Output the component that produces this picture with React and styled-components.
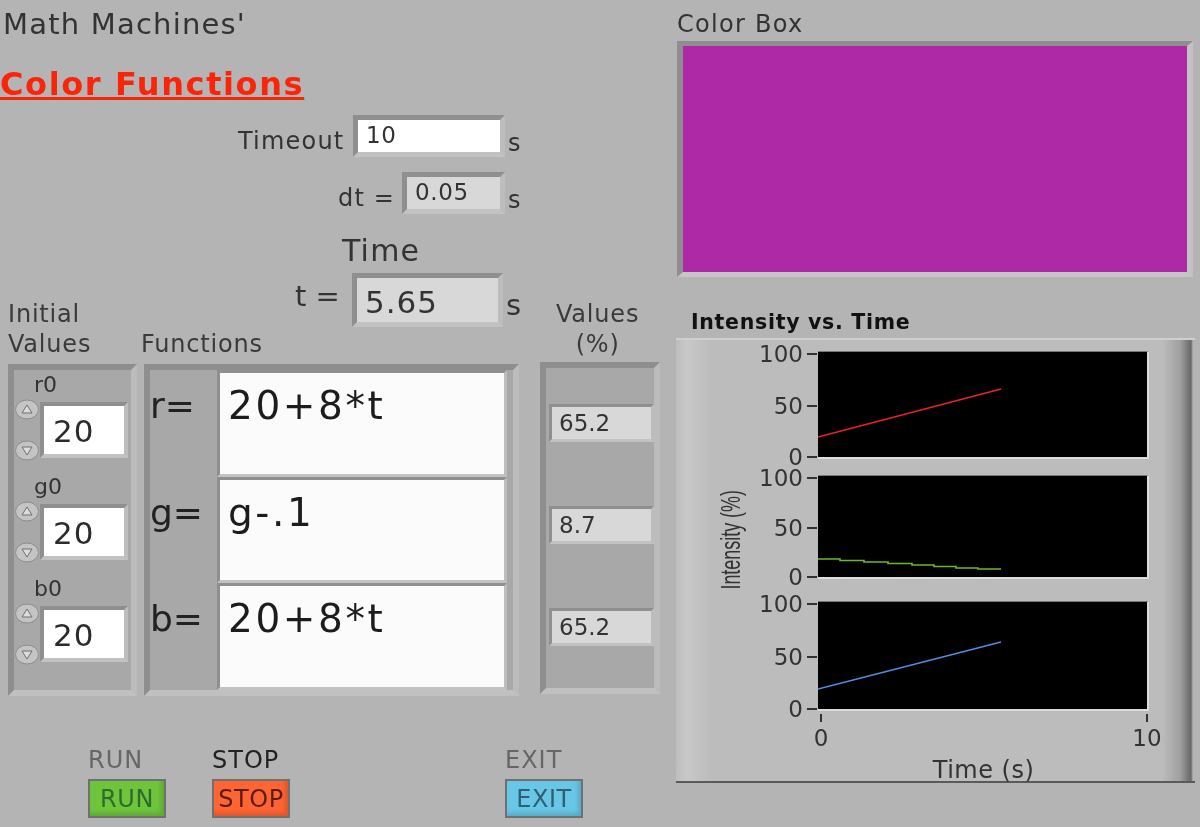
import React from "react";
import styled, { createGlobalStyle } from "styled-components";

const initials = [
  { name: "r0", value: "20" },
  { name: "g0", value: "20" },
  { name: "b0", value: "20" },
];
const functions = [
  { name: "r=", expr: "20+8*t" },
  { name: "g=", expr: "g-.1" },
  { name: "b=", expr: "20+8*t" },
];
const outputs = ["65.2", "8.7", "65.2"];
const plots = [
  { height: 108, color: "#ee2420", points: "0,85 183,37" },
  {
    height: 104,
    color: "#6ab82f",
    points:
      "0,83 22,83 22,84.5 46,84.5 46,86 70,86 70,87.5 94,87.5 94,89 116,89 116,90.5 138,90.5 138,92 160,92 160,93 183,93",
  },
  { height: 110, color: "#4f8fe0", points: "0,87 183,40" },
];

function Spin({ down }) {
  return (
    <svg width="26" height="21" viewBox="0 0 26 21">
      <ellipse cx="13" cy="10.5" rx="11.5" ry="9.5" fill="#c4c4c4" stroke="#8c8c8c" />
      <path
        d={down ? "M8 7h10l-5 8z" : "M8 14h10l-5-8z"}
        fill="#dcdcdc"
        stroke="#6f6f6f"
      />
    </svg>
  );
}

export default function App() {
  return (
    <Page>
      <GlobalStyle />
      <LeftColumn>
        <Heading>Math Machines'</Heading>
        <Title>Color Functions</Title>
        <SettingRow $left={238} $top={15}>
          <SettingLabel $width={115}>Timeout</SettingLabel>
          <Control $width={152}>10</Control>
          <Unit>s</Unit>
        </SettingRow>
        <SettingRow $left={338} $top={15}>
          <SettingLabel $width={64}>dt =</SettingLabel>
          <Indicator $width={103}>0.05</Indicator>
          <Unit>s</Unit>
        </SettingRow>
        <TimeLabel>Time</TimeLabel>
        <TimeRow>
          <TimeName>t =</TimeName>
          <TimeValue>5.65</TimeValue>
          <TimeUnit>s</TimeUnit>
        </TimeRow>
        <HeaderRow>
          <InitialHeader>
            Initial
            <br />
            Values
          </InitialHeader>
          <FunctionsHeader>Functions</FunctionsHeader>
          <ValuesHeader>
            Values
            <br />
            (%)
          </ValuesHeader>
        </HeaderRow>
        <PanelRow>
          <InitialPanel>
            {initials.map((item) => (
              <InitialCell key={item.name}>
                <CellName>{item.name}</CellName>
                <SpinRow>
                  <Spinner>
                    <Spin />
                    <Spin down />
                  </Spinner>
                  <SpinField>{item.value}</SpinField>
                </SpinRow>
              </InitialCell>
            ))}
          </InitialPanel>
          <FunctionPanel>
            {functions.map((item) => (
              <FunctionRow key={item.name}>
                <FunctionName>{item.name}</FunctionName>
                <FunctionField>{item.expr}</FunctionField>
              </FunctionRow>
            ))}
          </FunctionPanel>
          <ValuePanel>
            {outputs.map((value, idx) => (
              <ValueCell key={idx}>
                <ValueField>{value}</ValueField>
              </ValueCell>
            ))}
          </ValuePanel>
        </PanelRow>
        <ButtonRow>
          <ButtonGroup $left={88}>
            <ButtonLabel $color="#666">RUN</ButtonLabel>
            <Button $bg="#6fc43c" $color="#2e6b2c">
              RUN
            </Button>
          </ButtonGroup>
          <ButtonGroup $left={46}>
            <ButtonLabel $color="#222">STOP</ButtonLabel>
            <Button $bg="#ff6433" $color="#5b1c12">
              STOP
            </Button>
          </ButtonGroup>
          <ButtonGroup $left={215}>
            <ButtonLabel $color="#666">EXIT</ButtonLabel>
            <Button $bg="#68c6e6" $color="#2f5f70">
              EXIT
            </Button>
          </ButtonGroup>
        </ButtonRow>
      </LeftColumn>
      <RightColumn>
        <BoxLabel>Color Box</BoxLabel>
        <ColorBox />
        <ChartTitle>Intensity vs. Time</ChartTitle>
        <ChartPanel>
          <AxisTitle>
            <span>Intensity (%)</span>
          </AxisTitle>
          <ChartColumn>
            {plots.map((plot, idx) => (
              <PlotRow key={idx} $gap={idx === 0 ? 0 : idx === 1 ? 16 : 22}>
                <YTicks>
                  <YTick>100</YTick>
                  <YTick>50</YTick>
                  <YTick>0</YTick>
                </YTicks>
                <Plot $height={plot.height}>
                  <svg width="100%" height="100%">
                    <polyline
                      points={plot.points}
                      fill="none"
                      stroke={plot.color}
                      strokeWidth="1.6"
                    />
                  </svg>
                </Plot>
              </PlotRow>
            ))}
            <XAxis>
              <XTick>0</XTick>
              <XTick>10</XTick>
            </XAxis>
            <XTitle>Time (s)</XTitle>
          </ChartColumn>
        </ChartPanel>
      </RightColumn>
    </Page>
  );
}

const GlobalStyle = createGlobalStyle`
  html, body {
    margin: 0;
    padding: 0;
    background: #b4b4b4;
    overflow: hidden;
  }
  * {
    box-sizing: border-box;
  }
`;

const Page = styled.div`
  display: flex;
  width: 1200px;
  height: 827px;
  background: #b4b4b4;
  color: #2b2b2b;
  font-family: "DejaVu Sans", Verdana, sans-serif;
  filter: blur(0.35px);
`;

const LeftColumn = styled.div`
  display: flex;
  flex-direction: column;
  width: 677px;
`;

const RightColumn = styled.div`
  display: flex;
  flex-direction: column;
  width: 523px;
`;

const Heading = styled.div`
  margin-top: 8px;
  padding-left: 3px;
  font-size: 29px;
  line-height: 32px;
  letter-spacing: 1.2px;
  color: #333;
`;

const Title = styled.div`
  margin-top: 28px;
  font-size: 32px;
  line-height: 32px;
  letter-spacing: 1.6px;
  font-weight: bold;
  color: #fa2408;
  text-decoration: underline;
  white-space: nowrap;
`;

const SettingRow = styled.div`
  display: flex;
  align-items: center;
  height: 42px;
  margin-top: ${(p) => p.$top}px;
  padding-left: ${(p) => p.$left}px;
`;

const SettingLabel = styled.span`
  width: ${(p) => p.$width}px;
  padding-top: 9px;
  font-size: 24px;
  letter-spacing: 1.2px;
  color: #333;
  white-space: nowrap;
`;

const Recessed = styled.div`
  display: flex;
  align-items: center;
  border-style: solid;
  border-color: #8f8f8f #bdbdbd #c2c2c2 #8f8f8f;
`;

const Control = styled(Recessed)`
  width: ${(p) => p.$width}px;
  height: 42px;
  padding: 0 0 2px 8px;
  border-width: 5px;
  background: #fff;
  font-size: 23px;
  letter-spacing: 0.6px;
  color: #333;
`;

const Indicator = styled(Control)`
  background: #d8d8d8;
`;

const Unit = styled.span`
  margin: 14px 0 0 3px;
  font-size: 24px;
  color: #333;
`;

const TimeLabel = styled.div`
  margin-top: 23px;
  padding-left: 342px;
  font-size: 30px;
  line-height: 28px;
  letter-spacing: 1.2px;
  color: #333;
`;

const TimeRow = styled.div`
  display: flex;
  align-items: center;
  height: 54px;
  margin-top: 8px;
  padding-left: 295px;
`;

const TimeName = styled.span`
  width: 57px;
  padding-bottom: 8px;
  font-size: 29px;
  color: #333;
  white-space: pre;
`;

const TimeValue = styled(Recessed)`
  width: 151px;
  height: 54px;
  padding: 4px 0 0 8px;
  border-width: 5px;
  background: #d8d8d8;
  font-size: 31px;
  letter-spacing: 1px;
  color: #333;
`;

const TimeUnit = styled.span`
  margin: 10px 0 0 3px;
  font-size: 29px;
  color: #333;
`;

const HeaderRow = styled.div`
  display: flex;
  height: 61px;
  margin-top: -24px;
  padding-left: 8px;
  font-size: 24px;
  line-height: 30px;
  letter-spacing: 0.8px;
  color: #3a3a3a;
`;

const InitialHeader = styled.div`
  width: 133px;
  margin-top: -4px;
`;

const FunctionsHeader = styled.div`
  width: 415px;
  padding-top: 26px;
`;

const ValuesHeader = styled.div`
  margin-top: -4px;
  text-align: center;
`;

const PanelRow = styled.div`
  display: flex;
  align-items: flex-start;
  padding-left: 8px;
`;

const Raised = styled.div`
  display: flex;
  flex-direction: column;
  height: 332px;
  border-style: solid;
  border-width: 6px;
  border-color: #8e8e8e #bcbcbc #c0c0c0 #8e8e8e;
  background: #a8a8a8;
`;

const InitialPanel = styled(Raised)`
  width: 129px;
`;

const InitialCell = styled.div`
  height: 102px;
  padding-top: 3px;
`;

const CellName = styled.div`
  padding-left: 20px;
  font-size: 22px;
  line-height: 24px;
  color: #333;
`;

const SpinRow = styled.div`
  display: flex;
  align-items: center;
  margin-top: 2px;
`;

const Spinner = styled.div`
  display: flex;
  flex-direction: column;
  justify-content: space-between;
  flex: none;
  width: 26px;
  height: 62px;
`;

const SpinField = styled(Recessed)`
  width: 88px;
  height: 56px;
  padding: 2px 0 0 9px;
  border-width: 4px;
  background: #fff;
  font-size: 31px;
  letter-spacing: 1px;
  color: #2b2b2b;
`;

const FunctionPanel = styled(Raised)`
  width: 375px;
  margin-left: 7px;
`;

const FunctionRow = styled.div`
  display: flex;
  flex: 1;
`;

const FunctionName = styled.div`
  width: 67px;
  padding-top: 14px;
  font-size: 36px;
  line-height: 44px;
  color: #222;
`;

const FunctionField = styled(Recessed)`
  align-items: flex-start;
  width: 290px;
  padding: 7px 0 0 8px;
  border-width: 3px;
  background: #fbfbfb;
  font-size: 39px;
  line-height: 52px;
  letter-spacing: 2.6px;
  color: #1c1c1c;
`;

const ValuePanel = styled(Raised)`
  width: 120px;
  margin: -2px 0 0 21px;
  padding-top: 4px;
`;

const ValueCell = styled.div`
  display: flex;
  align-items: center;
  height: 102px;
  padding-left: 3px;
`;

const ValueField = styled(Recessed)`
  width: 106px;
  height: 38px;
  padding-left: 7px;
  border-width: 3px;
  background: #d8d8d8;
  font-size: 23px;
  color: #333;
`;

const ButtonRow = styled.div`
  display: flex;
  margin-top: 52px;
`;

const ButtonGroup = styled.div`
  display: flex;
  flex-direction: column;
  margin-left: ${(p) => p.$left}px;
`;

const ButtonLabel = styled.div`
  font-size: 24px;
  line-height: 24px;
  letter-spacing: 1px;
  color: ${(p) => p.$color};
`;

const Button = styled.div`
  display: flex;
  align-items: center;
  justify-content: center;
  width: 78px;
  height: 39px;
  margin-top: 7px;
  border: 2px solid #707070;
  background: ${(p) => p.$bg};
  color: ${(p) => p.$color};
  font-size: 24px;
  letter-spacing: 0.6px;
  white-space: nowrap;
  box-shadow: inset -3px -3px 4px rgba(0, 0, 0, 0.14);
`;

const BoxLabel = styled.div`
  margin-top: 10px;
  font-size: 24px;
  line-height: 28px;
  letter-spacing: 1.3px;
  color: #333;
`;

const ColorBox = styled.div`
  width: 516px;
  height: 236px;
  margin-top: 3px;
  border-style: solid;
  border-width: 5px 6px;
  border-color: #8e8e8e #c2c2c2 #c6c6c6 #8e8e8e;
  background: #ae29a6;
`;

const ChartTitle = styled.div`
  margin: 34px 0 0 14px;
  font-size: 20.5px;
  line-height: 22px;
  font-weight: bold;
  letter-spacing: 0.7px;
  color: #111;
`;

const ChartPanel = styled.div`
  display: flex;
  width: 519px;
  height: 445px;
  margin: 5px 0 0 -1px;
  padding: 11px 0 0 41px;
  border-top: 2px solid #cfcfcf;
  border-bottom: 2px solid #5a5a5a;
  background: linear-gradient(
    90deg,
    #bdbdbd 0,
    #c8c8c8 10px,
    #bcbcbc 36px,
    #bcbcbc 486px,
    #a0a0a0 504px,
    #686868 515px,
    #b4b4b4 517px
  );
`;

const AxisTitle = styled.div`
  display: flex;
  align-items: center;
  justify-content: center;
  width: 28px;
  height: 378px;
  span {
    writing-mode: vertical-rl;
    transform: rotate(180deg) scaleY(0.64);
    font-family: "Liberation Sans", Arial, sans-serif;
    font-size: 28px;
    white-space: nowrap;
    color: #333;
  }
`;

const ChartColumn = styled.div`
  display: flex;
  flex-direction: column;
`;

const PlotRow = styled.div`
  display: flex;
  margin-top: ${(p) => p.$gap}px;
`;

const YTicks = styled.div`
  display: flex;
  flex-direction: column;
  justify-content: space-between;
  align-items: flex-end;
  width: 73px;
  margin: -7px 0 -8px;
`;

const YTick = styled.div`
  display: flex;
  align-items: center;
  font-size: 23px;
  line-height: 20px;
  color: #333;
  &::after {
    content: "";
    width: 10px;
    height: 2px;
    margin: 0 1px 0 4px;
    background: #333;
  }
`;

const Plot = styled.div`
  width: 331px;
  height: ${(p) => p.$height}px;
  background: #000;
  border-top: 1px solid #777;
  border-right: 2px solid #dcdcdc;
  border-bottom: 2px solid #dcdcdc;
  svg {
    display: block;
  }
`;

const XAxis = styled.div`
  display: flex;
  justify-content: space-between;
  margin: 3px 0 0 75px;
  width: 328px;
`;

const XTick = styled.div`
  display: flex;
  flex-direction: column;
  align-items: center;
  width: 2px;
  font-size: 23px;
  line-height: 26px;
  color: #333;
  white-space: nowrap;
  &::before {
    content: "";
    flex: none;
    width: 2px;
    height: 8px;
    margin-bottom: 3px;
    background: #333;
  }
`;

const XTitle = styled.div`
  margin: 6px 0 0 73px;
  width: 331px;
  text-align: center;
  font-size: 24px;
  line-height: 26px;
  letter-spacing: 0.5px;
  color: #333;
`;
